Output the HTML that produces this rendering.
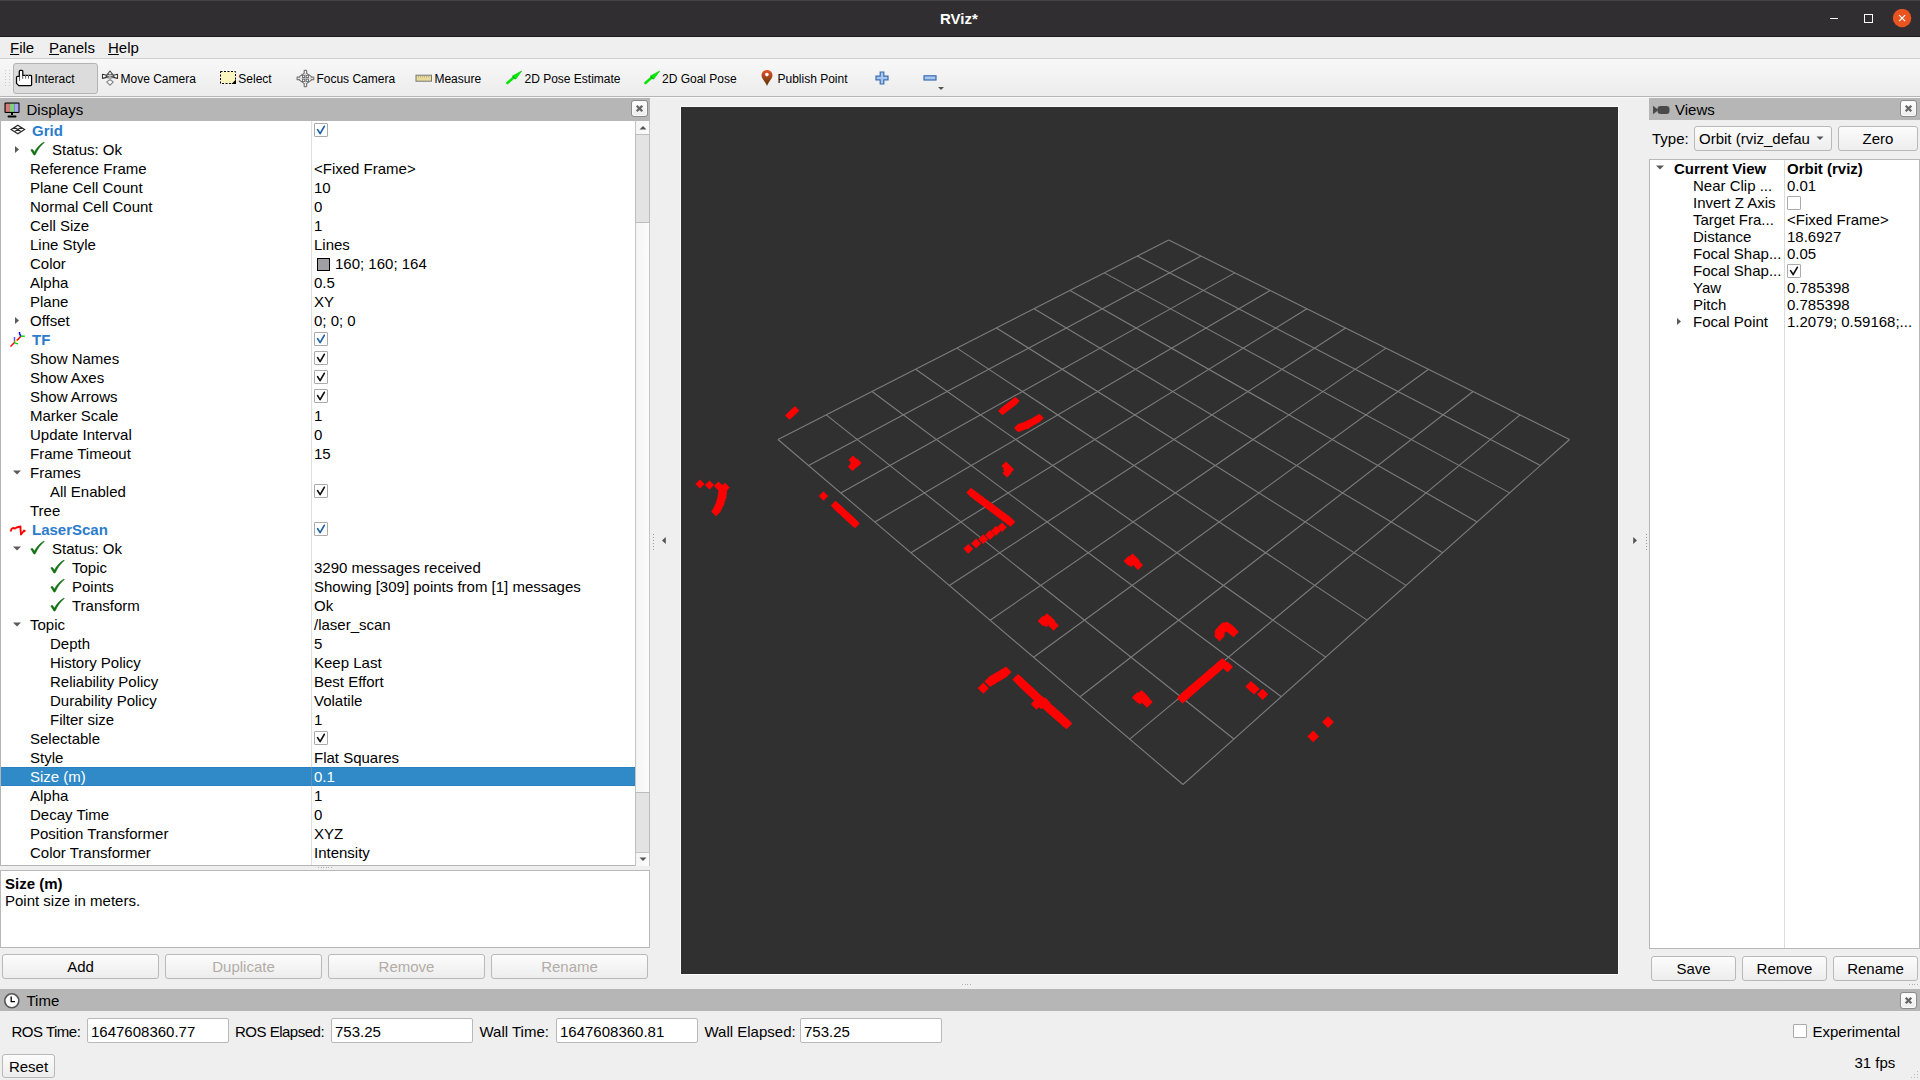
<!DOCTYPE html>
<html><head><meta charset="utf-8"><title>RViz</title>
<style>
html,body{margin:0;padding:0;width:1920px;height:1080px;overflow:hidden;background:#efefef;position:relative}
body>div,body>svg{position:absolute}
.t{font-family:"Liberation Sans", sans-serif;white-space:nowrap;line-height:normal}
</style></head><body>
<div style="left:0px;top:0px;width:1920px;height:37px;background:#302e30"></div>
<div style="left:0px;top:0px;width:1920px;height:1px;background:#454345"></div>
<div style="left:0px;top:36px;width:1920px;height:1px;background:#1c1b1c"></div>
<div class="t" style="left:940px;top:10px;font-size:15px;color:#fff;font-weight:bold">RViz*</div>
<div style="left:1830px;top:17.5px;width:8px;height:1.6px;background:#fff"></div>
<div style="left:1864px;top:14px;width:9px;height:9px;border:1.5px solid #fff;box-sizing:border-box"></div>
<svg style="left:1893px;top:9px" width="19" height="19"><circle cx="9.1" cy="9.1" r="9.2" fill="#e95420"/><path d="M6.1 6.1L12.1 12.1M12.1 6.1L6.1 12.1" stroke="#fff" stroke-width="1.2"/></svg>
<div style="left:0px;top:37px;width:1920px;height:21px;background:#efefef"></div>
<div class="t" style="left:10px;top:39px;font-size:15px;color:#000"><u>F</u>ile</div>
<div class="t" style="left:49px;top:39px;font-size:15px;color:#000"><u>P</u>anels</div>
<div class="t" style="left:108px;top:39px;font-size:15px;color:#000"><u>H</u>elp</div>
<div style="left:0px;top:58px;width:1920px;height:1px;background:#cfcfcf"></div>
<div style="left:0px;top:59px;width:1920px;height:1px;background:#fafafa"></div>
<div style="left:0px;top:59px;width:1920px;height:37px;background:linear-gradient(#f8f8f8,#ececec)"></div>
<div style="left:0px;top:96px;width:1920px;height:1px;background:#b5b5b5"></div>
<div style="left:0px;top:97px;width:1920px;height:1px;background:#f8f8f8"></div>
<div style="left:5.0px;top:70px;width:1.2px;height:1.2px;background:#c8c8c8"></div>
<div style="left:8.5px;top:70px;width:1.2px;height:1.2px;background:#c8c8c8"></div>
<div style="left:5.0px;top:73px;width:1.2px;height:1.2px;background:#c8c8c8"></div>
<div style="left:8.5px;top:73px;width:1.2px;height:1.2px;background:#c8c8c8"></div>
<div style="left:5.0px;top:76px;width:1.2px;height:1.2px;background:#c8c8c8"></div>
<div style="left:8.5px;top:76px;width:1.2px;height:1.2px;background:#c8c8c8"></div>
<div style="left:5.0px;top:79px;width:1.2px;height:1.2px;background:#c8c8c8"></div>
<div style="left:8.5px;top:79px;width:1.2px;height:1.2px;background:#c8c8c8"></div>
<div style="left:5.0px;top:82px;width:1.2px;height:1.2px;background:#c8c8c8"></div>
<div style="left:8.5px;top:82px;width:1.2px;height:1.2px;background:#c8c8c8"></div>
<div style="left:5.0px;top:85px;width:1.2px;height:1.2px;background:#c8c8c8"></div>
<div style="left:8.5px;top:85px;width:1.2px;height:1.2px;background:#c8c8c8"></div>
<div style="left:13px;top:63px;width:85px;height:31px;background:#dcdcdc;border:1px solid #b4b4b4;border-radius:3px;box-sizing:border-box"></div>
<svg style="left:12px;top:66px" width="24" height="24" viewBox="12 66 24 24"><path d="M19.3 76.3 L19.3 71.3 Q19.3 70.3 20.3 70.3 L21.8 70.3 Q22.8 70.3 22.8 71.3 L22.8 75.4 L30.8 75.4 Q31.6 75.6 31.6 76.5 L31.6 84.6 Q31.6 85.6 30.6 85.6 L18.8 85.6 L16.5 83.4 L16.5 77.3 Q16.6 76.3 17.5 76.3 Z" fill="#fff" stroke="#000" stroke-width="1.25" stroke-linejoin="round"/><path d="M19.6 76.5V80.8M22.7 75.6V78.8M25.6 75.6V78.6M28.5 75.6V78.6" stroke="#333" stroke-width="0.8"/><path d="M25.6 75.3V75.9M28.5 75.3V75.9" stroke="#ddd" stroke-width="0.8"/></svg>
<div class="t" style="left:34.5px;top:71.5px;font-size:12px;color:#000">Interact</div>
<svg style="left:98px;top:66px" width="24" height="24" viewBox="98 66 24 24"><path d="M110 79.3 L106.8 82 L110 85.2 L113.2 82 Z" fill="#fff" stroke="#888" stroke-width="1.1"/><path d="M110 71 L114.2 76.3 L105.8 76.3 Z" fill="#fff" stroke="#444" stroke-width="1.1" stroke-linejoin="round"/><path d="M102.5 74.3 L106.5 75.3 L106.5 77.4 L102.5 78.4 Z M117.5 74.3 L113.5 75.3 L113.5 77.4 L117.5 78.4 Z" fill="#fff" stroke="#333" stroke-width="1.1" stroke-linejoin="round"/><ellipse cx="110" cy="76.2" rx="4.2" ry="1.9" fill="none" stroke="#555" stroke-width="1"/><path d="M110 74.5V81" stroke="#bbb" stroke-width="1.2"/></svg>
<div class="t" style="left:120.5px;top:71.5px;font-size:12px;color:#000">Move Camera</div>
<svg style="left:219px;top:70px" width="18" height="15" viewBox="0 0 18 15"><rect x="1.5" y="1.5" width="15" height="12" fill="#fbf6c0" stroke="#000" stroke-width="1" stroke-dasharray="2,1.5"/><path d="M17 9.5 L17 14 L12.5 14 Z" fill="#000"/></svg>
<div class="t" style="left:238.3px;top:71.5px;font-size:12px;color:#000">Select</div>
<svg style="left:292px;top:66px" width="24" height="24" viewBox="292 66 24 24"><path d="M304.2 70.3 H306.6 V73.3 L311.2 76.6 V77.2 H313.7 V79.7 H311.2 V80.2 L306.6 83.6 V86.6 H304.2 V83.6 L299.6 80.2 V79.7 H297.1 V77.2 H299.6 V76.6 L304.2 73.3 Z" fill="#fafafa" stroke="#7a7a7a" stroke-width="1.2" stroke-linejoin="round"/><path d="M305.4 73V84M298.5 78.4H312.3" stroke="#c8c8c8" stroke-width="0.8"/><rect x="302.4" y="75.3" width="2.3" height="2.3" fill="none" stroke="#666" stroke-width="0.9"/><rect x="306.2" y="75.3" width="2.3" height="2.3" fill="none" stroke="#666" stroke-width="0.9"/><rect x="302.4" y="79.2" width="2.3" height="2.3" fill="none" stroke="#666" stroke-width="0.9"/><rect x="306.2" y="79.2" width="2.3" height="2.3" fill="none" stroke="#666" stroke-width="0.9"/></svg>
<div class="t" style="left:316.4px;top:71.5px;font-size:12px;color:#000">Focus Camera</div>
<svg style="left:415px;top:74px" width="18" height="9" viewBox="0 0 18 9"><rect x="1" y="1.2" width="15.5" height="6" fill="#e9dc9a" stroke="#777" stroke-width="1"/><path d="M3.5 1.5V3.5M5.5 1.5V3.5M7.5 1.5V3.5M9.5 1.5V3.5M11.5 1.5V3.5M13.5 1.5V3.5" stroke="#999" stroke-width="0.6"/></svg>
<div class="t" style="left:434.4px;top:71.5px;font-size:12px;color:#000">Measure</div>
<svg style="left:502px;top:66px" width="24" height="24" viewBox="502 66 24 24"><path d="M507.4 83 L514 77.3" stroke="#00e600" stroke-width="2.5" stroke-linecap="round"/><path d="M521.7 71 L512.4 76 L515.7 79.2 Z" fill="#00f000" stroke="#00c800" stroke-width="0.6" stroke-linejoin="round"/><path d="M513 76.6 L515 78.6" stroke="#0a6a0a" stroke-width="1"/></svg>
<div class="t" style="left:524.5px;top:71.5px;font-size:12px;color:#000">2D Pose Estimate</div>
<svg style="left:640.4px;top:66px" width="24" height="24" viewBox="502 66 24 24"><path d="M507.4 83 L514 77.3" stroke="#00e600" stroke-width="2.5" stroke-linecap="round"/><path d="M521.7 71 L512.4 76 L515.7 79.2 Z" fill="#00f000" stroke="#00c800" stroke-width="0.6" stroke-linejoin="round"/><path d="M513 76.6 L515 78.6" stroke="#0a6a0a" stroke-width="1"/></svg>
<div class="t" style="left:662px;top:71.5px;font-size:12px;color:#000">2D Goal Pose</div>
<svg style="left:760px;top:69px" width="14" height="18" viewBox="0 0 14 18"><defs><linearGradient id="pg" x1="0" y1="0" x2="0" y2="1"><stop offset="0" stop-color="#e8532a"/><stop offset="1" stop-color="#4f3508"/></linearGradient></defs><path d="M7 17 C5 12 1.5 9.5 1.5 6.5 C1.5 3.2 4 1 7 1 C10 1 12.5 3.2 12.5 6.5 C12.5 9.5 9 12 7 17 Z" fill="url(#pg)"/><circle cx="6.9" cy="5.6" r="1.8" fill="#fff"/></svg>
<div class="t" style="left:777.5px;top:71.5px;font-size:12px;color:#000">Publish Point</div>
<svg style="left:875px;top:71px" width="14" height="14" viewBox="0 0 14 14"><path d="M5.2 1H8.8V5.2H13V8.8H8.8V13H5.2V8.8H1V5.2H5.2Z" fill="#a9c6ec" stroke="#3a6cb3" stroke-width="1.2"/></svg>
<svg style="left:923px;top:75px" width="14" height="6" viewBox="0 0 14 6"><rect x="1" y="0.8" width="12" height="4.2" fill="#a9c6ec" stroke="#3a6cb3" stroke-width="1.2"/></svg>
<svg style="left:937px;top:86px" width="8" height="5" viewBox="0 0 8 5"><path d="M1 1H7L4 4Z" fill="#555"/></svg>
<div style="left:0px;top:98px;width:650px;height:23px;background:#b6b6b6"></div>
<svg style="left:3px;top:101px" width="18" height="18" viewBox="0 0 18 18"><rect x="1.5" y="1.5" width="15" height="10.5" rx="1" fill="#000"/><rect x="2.6" y="2.6" width="4.3" height="8.3" fill="#d77a7a"/><rect x="6.9" y="2.6" width="4.4" height="8.3" fill="#7fcf7f"/><rect x="11.3" y="2.6" width="4.2" height="8.3" fill="#a6a6f0"/><path d="M8 12H10V14H8Z" fill="#000"/><rect x="4.5" y="14.5" width="9" height="2" rx="1" fill="#000"/></svg>
<div class="t" style="left:26.5px;top:101px;font-size:15px;color:#000">Displays</div>
<div style="left:631px;top:100px;width:17px;height:17px;box-sizing:border-box;border:1px solid #8a8a8a;border-radius:3px;background:linear-gradient(#ffffff,#ececec);box-shadow:inset 0 0 0 1px #fafafa"></div>
<svg style="left:631px;top:100px" width="17" height="17" viewBox="0 0 17 17"><path d="M5.7 5.7L11.3 11.3M11.3 5.7L5.7 11.3" stroke="#666" stroke-width="2.3"/></svg>
<div style="left:0px;top:121px;width:650px;height:745px;background:#fff;border-left:1px solid #b4b4b4;border-bottom:1px solid #b4b4b4;box-sizing:border-box"></div>
<div style="left:311px;top:121px;width:1px;height:744px;background:#e0e0e0"></div>
<div style="left:635px;top:121px;width:15px;height:745px;background:linear-gradient(90deg,#f4f4f4,#fcfcfc);border-left:1px solid #c4c4c4;border-right:1px solid #c4c4c4;box-sizing:border-box"></div>
<div style="left:635px;top:134px;width:15px;height:89px;background:#e3e3e3;border:1px solid #bcbcbc;box-sizing:border-box"></div>
<svg style="left:636.5px;top:123px" width="12" height="10" viewBox="0 0 12 10"><path d="M2.5 6.5H9.5L6 3Z" fill="#555"/></svg>
<div style="left:635px;top:792px;width:15px;height:61px;background:#e3e3e3;border:1px solid #bcbcbc;box-sizing:border-box"></div>
<div style="left:635px;top:852px;width:15px;height:1px;background:#c4c4c4"></div>
<svg style="left:636.5px;top:854px" width="12" height="10" viewBox="0 0 12 10"><path d="M2.5 3.5H9.5L6 7Z" fill="#555"/></svg>
<svg style="left:10px;top:124px" width="17" height="12" viewBox="0 0 17 12"><path d="M7.85 1.2 L14.6 5.5 L7.85 9.8 L1.1 5.5Z M4.5 3.35 L11.2 7.65 M11.2 3.35 L4.5 7.65" fill="none" stroke="#2a2a2a" stroke-width="1.15"/></svg>
<div class="t" style="left:32px;top:122px;font-size:15px;color:#2b7ccc;font-weight:bold">Grid</div>
<div style="left:314px;top:123px;width:14px;height:14px;box-sizing:border-box;border:1px solid #ababab;border-radius:1px;background:#fff"></div>
<svg style="left:314px;top:123px" width="14" height="14" viewBox="0 0 14 14"><path d="M3.6 6.6 L6.1 10.6 L10.3 3.3" fill="none" stroke="#1f5fa8" stroke-width="1.7" stroke-linecap="round" stroke-linejoin="round"/></svg>
<svg style="left:13px;top:143px" width="8" height="13" viewBox="0 0 8 13"><path d="M2 3 L6 6.5 L2 10Z" fill="#5a5a5a"/></svg>
<svg style="left:30px;top:140px" width="16" height="19" viewBox="0 0 16 19"><path d="M0.8 9.9 Q1.9 8.9 2.9 9.8 L4.3 12.2 C6.6 8 9.6 4.6 14 2 L14.3 2.6 C10.6 5.6 7.6 9.6 5.3 14.7 Q4.4 15.6 3.6 14.7 Z" fill="#137013" stroke="#137013" stroke-width="0.5" stroke-linejoin="round"/></svg>
<div class="t" style="left:52px;top:141px;font-size:15px;color:#000">Status: Ok</div>
<div class="t" style="left:30px;top:160px;font-size:15px;color:#000">Reference Frame</div>
<div class="t" style="left:314px;top:160px;font-size:15px;color:#000">&lt;Fixed Frame&gt;</div>
<div class="t" style="left:30px;top:179px;font-size:15px;color:#000">Plane Cell Count</div>
<div class="t" style="left:314px;top:179px;font-size:15px;color:#000">10</div>
<div class="t" style="left:30px;top:198px;font-size:15px;color:#000">Normal Cell Count</div>
<div class="t" style="left:314px;top:198px;font-size:15px;color:#000">0</div>
<div class="t" style="left:30px;top:217px;font-size:15px;color:#000">Cell Size</div>
<div class="t" style="left:314px;top:217px;font-size:15px;color:#000">1</div>
<div class="t" style="left:30px;top:236px;font-size:15px;color:#000">Line Style</div>
<div class="t" style="left:314px;top:236px;font-size:15px;color:#000">Lines</div>
<div class="t" style="left:30px;top:255px;font-size:15px;color:#000">Color</div>
<div style="left:317px;top:258px;width:13px;height:13px;background:#a0a0a4;border:1.3px solid #000;box-sizing:border-box"></div>
<div class="t" style="left:335px;top:255px;font-size:15px;color:#000">160; 160; 164</div>
<div class="t" style="left:30px;top:274px;font-size:15px;color:#000">Alpha</div>
<div class="t" style="left:314px;top:274px;font-size:15px;color:#000">0.5</div>
<div class="t" style="left:30px;top:293px;font-size:15px;color:#000">Plane</div>
<div class="t" style="left:314px;top:293px;font-size:15px;color:#000">XY</div>
<svg style="left:13px;top:314px" width="8" height="13" viewBox="0 0 8 13"><path d="M2 3 L6 6.5 L2 10Z" fill="#5a5a5a"/></svg>
<div class="t" style="left:30px;top:312px;font-size:15px;color:#000">Offset</div>
<div class="t" style="left:314px;top:312px;font-size:15px;color:#000">0; 0; 0</div>
<svg style="left:9px;top:331px" width="18" height="17" viewBox="0 0 18 17"><path d="M1.5 15.5 L5.5 11.5" stroke="#f00" stroke-width="1.5"/><path d="M5.5 11.5 L5.5 6" stroke="#55f" stroke-width="1.5"/><path d="M5.5 11.5 Q7 12.8 9 12.8" stroke="#0d0" stroke-width="1.5" fill="none"/><path d="M6 11 L8 8.5" stroke="#ee0" stroke-width="1.3"/><path d="M8 9.5 L11.8 5.2" stroke="#f00" stroke-width="1.5"/><path d="M11.8 5.2 L10.5 2.5 L10.5 1" stroke="#00f" stroke-width="1.5" fill="none"/><path d="M11.8 5.2 L15.8 5.2" stroke="#0d0" stroke-width="1.5"/></svg>
<div class="t" style="left:32px;top:331px;font-size:15px;color:#2b7ccc;font-weight:bold">TF</div>
<div style="left:314px;top:332px;width:14px;height:14px;box-sizing:border-box;border:1px solid #ababab;border-radius:1px;background:#fff"></div>
<svg style="left:314px;top:332px" width="14" height="14" viewBox="0 0 14 14"><path d="M3.6 6.6 L6.1 10.6 L10.3 3.3" fill="none" stroke="#1f5fa8" stroke-width="1.7" stroke-linecap="round" stroke-linejoin="round"/></svg>
<div class="t" style="left:30px;top:350px;font-size:15px;color:#000">Show Names</div>
<div style="left:314px;top:351px;width:14px;height:14px;box-sizing:border-box;border:1px solid #ababab;border-radius:1px;background:#fff"></div>
<svg style="left:314px;top:351px" width="14" height="14" viewBox="0 0 14 14"><path d="M3.6 6.6 L6.1 10.6 L10.3 3.3" fill="none" stroke="#111" stroke-width="1.7" stroke-linecap="round" stroke-linejoin="round"/></svg>
<div class="t" style="left:30px;top:369px;font-size:15px;color:#000">Show Axes</div>
<div style="left:314px;top:370px;width:14px;height:14px;box-sizing:border-box;border:1px solid #ababab;border-radius:1px;background:#fff"></div>
<svg style="left:314px;top:370px" width="14" height="14" viewBox="0 0 14 14"><path d="M3.6 6.6 L6.1 10.6 L10.3 3.3" fill="none" stroke="#111" stroke-width="1.7" stroke-linecap="round" stroke-linejoin="round"/></svg>
<div class="t" style="left:30px;top:388px;font-size:15px;color:#000">Show Arrows</div>
<div style="left:314px;top:389px;width:14px;height:14px;box-sizing:border-box;border:1px solid #ababab;border-radius:1px;background:#fff"></div>
<svg style="left:314px;top:389px" width="14" height="14" viewBox="0 0 14 14"><path d="M3.6 6.6 L6.1 10.6 L10.3 3.3" fill="none" stroke="#111" stroke-width="1.7" stroke-linecap="round" stroke-linejoin="round"/></svg>
<div class="t" style="left:30px;top:407px;font-size:15px;color:#000">Marker Scale</div>
<div class="t" style="left:314px;top:407px;font-size:15px;color:#000">1</div>
<div class="t" style="left:30px;top:426px;font-size:15px;color:#000">Update Interval</div>
<div class="t" style="left:314px;top:426px;font-size:15px;color:#000">0</div>
<div class="t" style="left:30px;top:445px;font-size:15px;color:#000">Frame Timeout</div>
<div class="t" style="left:314px;top:445px;font-size:15px;color:#000">15</div>
<svg style="left:12px;top:466.5px" width="10" height="13" viewBox="0 0 10 13"><path d="M1 3.5 H9 L5 7.5Z" fill="#5a5a5a"/></svg>
<div class="t" style="left:30px;top:464px;font-size:15px;color:#000">Frames</div>
<div class="t" style="left:50px;top:483px;font-size:15px;color:#000">All Enabled</div>
<div style="left:314px;top:484px;width:14px;height:14px;box-sizing:border-box;border:1px solid #ababab;border-radius:1px;background:#fff"></div>
<svg style="left:314px;top:484px" width="14" height="14" viewBox="0 0 14 14"><path d="M3.6 6.6 L6.1 10.6 L10.3 3.3" fill="none" stroke="#111" stroke-width="1.7" stroke-linecap="round" stroke-linejoin="round"/></svg>
<div class="t" style="left:30px;top:502px;font-size:15px;color:#000">Tree</div>
<svg style="left:9px;top:524px" width="18" height="12" viewBox="0 0 18 12"><path d="M1.5 7.5 L2.5 5 L4 4 L6 4.5 L7.5 3.5 L9.5 3 L11.5 2.5 L11.5 5 L12 10.5 L14 8 L15 6.5 L16.5 7.5" fill="none" stroke="#f00" stroke-width="1.9" stroke-linejoin="round"/></svg>
<div class="t" style="left:32px;top:521px;font-size:15px;color:#2b7ccc;font-weight:bold">LaserScan</div>
<div style="left:314px;top:522px;width:14px;height:14px;box-sizing:border-box;border:1px solid #ababab;border-radius:1px;background:#fff"></div>
<svg style="left:314px;top:522px" width="14" height="14" viewBox="0 0 14 14"><path d="M3.6 6.6 L6.1 10.6 L10.3 3.3" fill="none" stroke="#1f5fa8" stroke-width="1.7" stroke-linecap="round" stroke-linejoin="round"/></svg>
<svg style="left:12px;top:542.5px" width="10" height="13" viewBox="0 0 10 13"><path d="M1 3.5 H9 L5 7.5Z" fill="#5a5a5a"/></svg>
<svg style="left:30px;top:539px" width="16" height="19" viewBox="0 0 16 19"><path d="M0.8 9.9 Q1.9 8.9 2.9 9.8 L4.3 12.2 C6.6 8 9.6 4.6 14 2 L14.3 2.6 C10.6 5.6 7.6 9.6 5.3 14.7 Q4.4 15.6 3.6 14.7 Z" fill="#137013" stroke="#137013" stroke-width="0.5" stroke-linejoin="round"/></svg>
<div class="t" style="left:52px;top:540px;font-size:15px;color:#000">Status: Ok</div>
<svg style="left:50px;top:558px" width="16" height="19" viewBox="0 0 16 19"><path d="M0.8 9.9 Q1.9 8.9 2.9 9.8 L4.3 12.2 C6.6 8 9.6 4.6 14 2 L14.3 2.6 C10.6 5.6 7.6 9.6 5.3 14.7 Q4.4 15.6 3.6 14.7 Z" fill="#137013" stroke="#137013" stroke-width="0.5" stroke-linejoin="round"/></svg>
<div class="t" style="left:72px;top:559px;font-size:15px;color:#000">Topic</div>
<div class="t" style="left:314px;top:559px;font-size:15px;color:#000">3290 messages received</div>
<svg style="left:50px;top:577px" width="16" height="19" viewBox="0 0 16 19"><path d="M0.8 9.9 Q1.9 8.9 2.9 9.8 L4.3 12.2 C6.6 8 9.6 4.6 14 2 L14.3 2.6 C10.6 5.6 7.6 9.6 5.3 14.7 Q4.4 15.6 3.6 14.7 Z" fill="#137013" stroke="#137013" stroke-width="0.5" stroke-linejoin="round"/></svg>
<div class="t" style="left:72px;top:578px;font-size:15px;color:#000">Points</div>
<div class="t" style="left:314px;top:578px;font-size:15px;color:#000">Showing [309] points from [1] messages</div>
<svg style="left:50px;top:596px" width="16" height="19" viewBox="0 0 16 19"><path d="M0.8 9.9 Q1.9 8.9 2.9 9.8 L4.3 12.2 C6.6 8 9.6 4.6 14 2 L14.3 2.6 C10.6 5.6 7.6 9.6 5.3 14.7 Q4.4 15.6 3.6 14.7 Z" fill="#137013" stroke="#137013" stroke-width="0.5" stroke-linejoin="round"/></svg>
<div class="t" style="left:72px;top:597px;font-size:15px;color:#000">Transform</div>
<div class="t" style="left:314px;top:597px;font-size:15px;color:#000">Ok</div>
<svg style="left:12px;top:618.5px" width="10" height="13" viewBox="0 0 10 13"><path d="M1 3.5 H9 L5 7.5Z" fill="#5a5a5a"/></svg>
<div class="t" style="left:30px;top:616px;font-size:15px;color:#000">Topic</div>
<div class="t" style="left:314px;top:616px;font-size:15px;color:#000">/laser_scan</div>
<div class="t" style="left:50px;top:635px;font-size:15px;color:#000">Depth</div>
<div class="t" style="left:314px;top:635px;font-size:15px;color:#000">5</div>
<div class="t" style="left:50px;top:654px;font-size:15px;color:#000">History Policy</div>
<div class="t" style="left:314px;top:654px;font-size:15px;color:#000">Keep Last</div>
<div class="t" style="left:50px;top:673px;font-size:15px;color:#000">Reliability Policy</div>
<div class="t" style="left:314px;top:673px;font-size:15px;color:#000">Best Effort</div>
<div class="t" style="left:50px;top:692px;font-size:15px;color:#000">Durability Policy</div>
<div class="t" style="left:314px;top:692px;font-size:15px;color:#000">Volatile</div>
<div class="t" style="left:50px;top:711px;font-size:15px;color:#000">Filter size</div>
<div class="t" style="left:314px;top:711px;font-size:15px;color:#000">1</div>
<div class="t" style="left:30px;top:730px;font-size:15px;color:#000">Selectable</div>
<div style="left:314px;top:731px;width:14px;height:14px;box-sizing:border-box;border:1px solid #ababab;border-radius:1px;background:#fff"></div>
<svg style="left:314px;top:731px" width="14" height="14" viewBox="0 0 14 14"><path d="M3.6 6.6 L6.1 10.6 L10.3 3.3" fill="none" stroke="#111" stroke-width="1.7" stroke-linecap="round" stroke-linejoin="round"/></svg>
<div class="t" style="left:30px;top:749px;font-size:15px;color:#000">Style</div>
<div class="t" style="left:314px;top:749px;font-size:15px;color:#000">Flat Squares</div>
<div style="left:1px;top:767px;width:634px;height:19px;background:#308ac8;border-top:1px solid #2a81c2;border-bottom:1px solid #2a81c2;box-sizing:border-box"></div>
<div style="left:311px;top:767px;width:1px;height:19px;background:#5a93bd"></div>
<div class="t" style="left:30px;top:768px;font-size:15px;color:#fff">Size (m)</div>
<div class="t" style="left:314px;top:768px;font-size:15px;color:#fff">0.1</div>
<div class="t" style="left:30px;top:787px;font-size:15px;color:#000">Alpha</div>
<div class="t" style="left:314px;top:787px;font-size:15px;color:#000">1</div>
<div class="t" style="left:30px;top:806px;font-size:15px;color:#000">Decay Time</div>
<div class="t" style="left:314px;top:806px;font-size:15px;color:#000">0</div>
<div class="t" style="left:30px;top:825px;font-size:15px;color:#000">Position Transformer</div>
<div class="t" style="left:314px;top:825px;font-size:15px;color:#000">XYZ</div>
<div class="t" style="left:30px;top:844px;font-size:15px;color:#000">Color Transformer</div>
<div class="t" style="left:314px;top:844px;font-size:15px;color:#000">Intensity</div>
<div style="left:318.0px;top:867px;width:1px;height:1px;background:#b0b0b0"></div>
<div style="left:320.5px;top:867px;width:1px;height:1px;background:#b0b0b0"></div>
<div style="left:323.0px;top:867px;width:1px;height:1px;background:#b0b0b0"></div>
<div style="left:325.5px;top:867px;width:1px;height:1px;background:#b0b0b0"></div>
<div style="left:328.0px;top:867px;width:1px;height:1px;background:#b0b0b0"></div>
<div style="left:330.5px;top:867px;width:1px;height:1px;background:#b0b0b0"></div>
<div style="left:0px;top:870px;width:650px;height:78px;background:#fff;border:1px solid #b8b8b8;box-sizing:border-box"></div>
<div class="t" style="left:5px;top:875px;font-size:15px;color:#000;font-weight:bold">Size (m)</div>
<div class="t" style="left:5px;top:892px;font-size:15px;color:#000">Point size in meters.</div>
<div style="left:2px;top:954px;width:157px;height:25px;box-sizing:border-box;border:1px solid #b9b9b9;border-radius:3px;background:linear-gradient(#fcfcfc,#ededed)"></div>
<div class="t" style="left:2px;top:958px;width:157px;text-align:center;font-size:15px;color:#000">Add</div>
<div style="left:165px;top:954px;width:157px;height:25px;box-sizing:border-box;border:1px solid #b9b9b9;border-radius:3px;background:linear-gradient(#fcfcfc,#ededed)"></div>
<div class="t" style="left:165px;top:958px;width:157px;text-align:center;font-size:15px;color:#b2aca6">Duplicate</div>
<div style="left:328px;top:954px;width:157px;height:25px;box-sizing:border-box;border:1px solid #b9b9b9;border-radius:3px;background:linear-gradient(#fcfcfc,#ededed)"></div>
<div class="t" style="left:328px;top:958px;width:157px;text-align:center;font-size:15px;color:#b2aca6">Remove</div>
<div style="left:491px;top:954px;width:157px;height:25px;box-sizing:border-box;border:1px solid #b9b9b9;border-radius:3px;background:linear-gradient(#fcfcfc,#ededed)"></div>
<div class="t" style="left:491px;top:958px;width:157px;text-align:center;font-size:15px;color:#b2aca6">Rename</div>
<div style="left:680px;top:106px;width:939px;height:869px;background:#fafafa"></div>
<div style="left:681px;top:107px;width:937px;height:867px;background:#303030"></div>
<svg style="left:660px;top:536px" width="8" height="10" viewBox="0 0 8 10"><path d="M5.8 1V8L2 4.5Z" fill="#555"/></svg>
<div style="left:653px;top:534px;width:1.2px;height:1.2px;background:#9a9a9a"></div>
<div style="left:653px;top:537px;width:1.2px;height:1.2px;background:#9a9a9a"></div>
<div style="left:653px;top:540px;width:1.2px;height:1.2px;background:#9a9a9a"></div>
<div style="left:653px;top:543px;width:1.2px;height:1.2px;background:#9a9a9a"></div>
<div style="left:653px;top:546px;width:1.2px;height:1.2px;background:#9a9a9a"></div>
<div style="left:653px;top:549px;width:1.2px;height:1.2px;background:#9a9a9a"></div>
<div style="left:1646px;top:534px;width:1.2px;height:1.2px;background:#9a9a9a"></div>
<div style="left:1646px;top:537px;width:1.2px;height:1.2px;background:#9a9a9a"></div>
<div style="left:1646px;top:540px;width:1.2px;height:1.2px;background:#9a9a9a"></div>
<div style="left:1646px;top:543px;width:1.2px;height:1.2px;background:#9a9a9a"></div>
<div style="left:1646px;top:546px;width:1.2px;height:1.2px;background:#9a9a9a"></div>
<div style="left:1646px;top:549px;width:1.2px;height:1.2px;background:#9a9a9a"></div>
<svg style="left:1631px;top:536px" width="8" height="10" viewBox="0 0 8 10"><path d="M2.2 1V8L6 4.5Z" fill="#555"/></svg>
<div style="left:1649px;top:98px;width:271px;height:22px;background:#b6b6b6"></div>
<svg style="left:1652px;top:104px" width="19" height="12" viewBox="0 0 19 12"><path d="M1 1.8 L6.5 6 L1 10.2Z" fill="#4a4a4a"/><rect x="5.5" y="2" width="12" height="8" rx="3" fill="#4a4a4a"/></svg>
<div class="t" style="left:1675px;top:101px;font-size:15px;color:#000">Views</div>
<div style="left:1900px;top:100px;width:17px;height:17px;box-sizing:border-box;border:1px solid #8a8a8a;border-radius:3px;background:linear-gradient(#ffffff,#ececec);box-shadow:inset 0 0 0 1px #fafafa"></div>
<svg style="left:1900px;top:100px" width="17" height="17" viewBox="0 0 17 17"><path d="M5.7 5.7L11.3 11.3M11.3 5.7L5.7 11.3" stroke="#666" stroke-width="2.3"/></svg>
<div class="t" style="left:1652px;top:130px;font-size:15px;color:#000">Type:</div>
<div style="left:1694px;top:126px;width:138px;height:25px;box-sizing:border-box;border:1px solid #b9b9b9;border-radius:3px;background:linear-gradient(#fcfcfc,#ededed)"></div>
<div class="t" style="left:1699px;top:130px;width:111px;overflow:hidden;font-size:15px;color:#000">Orbit (rviz_default_plugins)</div>
<svg style="left:1815px;top:134px" width="10" height="8" viewBox="0 0 10 8"><path d="M1.5 2.5H8.5L5 6Z" fill="#555"/></svg>
<div style="left:1838px;top:126px;width:80px;height:25px;box-sizing:border-box;border:1px solid #b9b9b9;border-radius:3px;background:linear-gradient(#fcfcfc,#ededed)"></div>
<div class="t" style="left:1838px;top:130px;width:80px;text-align:center;font-size:15px;color:#000">Zero</div>
<div style="left:1649px;top:159px;width:271px;height:790px;background:#fff;border:1px solid #b8b8b8;box-sizing:border-box"></div>
<div style="left:1784px;top:160px;width:1px;height:788px;background:#dcdcdc"></div>
<svg style="left:1655px;top:162px" width="10" height="13" viewBox="0 0 10 13"><path d="M1 3.5 H9 L5 7.5Z" fill="#5a5a5a"/></svg>
<div class="t" style="left:1674px;top:160px;font-size:15px;color:#000;font-weight:bold">Current View</div>
<div class="t" style="left:1787px;top:160px;font-size:15px;color:#000;font-weight:bold">Orbit (rviz)</div>
<div class="t" style="left:1693px;top:177px;font-size:15px;color:#000">Near Clip ...</div>
<div class="t" style="left:1787px;top:177px;font-size:15px;color:#000">0.01</div>
<div class="t" style="left:1693px;top:194px;font-size:15px;color:#000">Invert Z Axis</div>
<div style="left:1787px;top:196px;width:14px;height:14px;box-sizing:border-box;border:1px solid #ababab;border-radius:1px;background:#fff"></div>
<div class="t" style="left:1693px;top:211px;font-size:15px;color:#000">Target Fra...</div>
<div class="t" style="left:1787px;top:211px;font-size:15px;color:#000">&lt;Fixed Frame&gt;</div>
<div class="t" style="left:1693px;top:228px;font-size:15px;color:#000">Distance</div>
<div class="t" style="left:1787px;top:228px;font-size:15px;color:#000">18.6927</div>
<div class="t" style="left:1693px;top:245px;font-size:15px;color:#000">Focal Shap...</div>
<div class="t" style="left:1787px;top:245px;font-size:15px;color:#000">0.05</div>
<div class="t" style="left:1693px;top:262px;font-size:15px;color:#000">Focal Shap...</div>
<div style="left:1787px;top:264px;width:14px;height:14px;box-sizing:border-box;border:1px solid #ababab;border-radius:1px;background:#fff"></div>
<svg style="left:1787px;top:264px" width="14" height="14" viewBox="0 0 14 14"><path d="M3.6 6.6 L6.1 10.6 L10.3 3.3" fill="none" stroke="#111" stroke-width="1.7" stroke-linecap="round" stroke-linejoin="round"/></svg>
<div class="t" style="left:1693px;top:279px;font-size:15px;color:#000">Yaw</div>
<div class="t" style="left:1787px;top:279px;font-size:15px;color:#000">0.785398</div>
<div class="t" style="left:1693px;top:296px;font-size:15px;color:#000">Pitch</div>
<div class="t" style="left:1787px;top:296px;font-size:15px;color:#000">0.785398</div>
<svg style="left:1675px;top:315px" width="8" height="13" viewBox="0 0 8 13"><path d="M2 3 L6 6.5 L2 10Z" fill="#5a5a5a"/></svg>
<div class="t" style="left:1693px;top:313px;font-size:15px;color:#000">Focal Point</div>
<div class="t" style="left:1787px;top:313px;font-size:15px;color:#000">1.2079; 0.59168;...</div>
<div style="left:1651px;top:956px;width:85px;height:25px;box-sizing:border-box;border:1px solid #b9b9b9;border-radius:3px;background:linear-gradient(#fcfcfc,#ededed)"></div>
<div class="t" style="left:1651px;top:960px;width:85px;text-align:center;font-size:15px;color:#000">Save</div>
<div style="left:1742px;top:956px;width:85px;height:25px;box-sizing:border-box;border:1px solid #b9b9b9;border-radius:3px;background:linear-gradient(#fcfcfc,#ededed)"></div>
<div class="t" style="left:1742px;top:960px;width:85px;text-align:center;font-size:15px;color:#000">Remove</div>
<div style="left:1833px;top:956px;width:85px;height:25px;box-sizing:border-box;border:1px solid #b9b9b9;border-radius:3px;background:linear-gradient(#fcfcfc,#ededed)"></div>
<div class="t" style="left:1833px;top:960px;width:85px;text-align:center;font-size:15px;color:#000">Rename</div>
<div style="left:962.0px;top:984px;width:1px;height:1px;background:#b0b0b0"></div>
<div style="left:964.5px;top:984px;width:1px;height:1px;background:#b0b0b0"></div>
<div style="left:967.0px;top:984px;width:1px;height:1px;background:#b0b0b0"></div>
<div style="left:969.5px;top:984px;width:1px;height:1px;background:#b0b0b0"></div>
<div style="left:1909.0px;top:984px;width:1px;height:1px;background:#b0b0b0"></div>
<div style="left:1911.5px;top:984px;width:1px;height:1px;background:#b0b0b0"></div>
<div style="left:1914.0px;top:984px;width:1px;height:1px;background:#b0b0b0"></div>
<div style="left:1916.5px;top:984px;width:1px;height:1px;background:#b0b0b0"></div>
<div style="left:0px;top:989px;width:1920px;height:22px;background:#b6b6b6"></div>
<svg style="left:3px;top:992px" width="18" height="18" viewBox="0 0 18 18"><circle cx="8.8" cy="8.8" r="7" fill="#fff" stroke="#555" stroke-width="1.6"/><path d="M8.2 4.5V9.6H12" fill="none" stroke="#000" stroke-width="1.3"/></svg>
<div class="t" style="left:26.5px;top:992px;font-size:15px;color:#000">Time</div>
<div style="left:1900px;top:992px;width:17px;height:17px;box-sizing:border-box;border:1px solid #8a8a8a;border-radius:3px;background:linear-gradient(#ffffff,#ececec);box-shadow:inset 0 0 0 1px #fafafa"></div>
<svg style="left:1900px;top:992px" width="17" height="17" viewBox="0 0 17 17"><path d="M5.7 5.7L11.3 11.3M11.3 5.7L5.7 11.3" stroke="#666" stroke-width="2.3"/></svg>
<div class="t" style="left:11.5px;top:1023px;font-size:15px;color:#000;letter-spacing:-0.5px">ROS Time:</div>
<div style="left:87px;top:1018px;width:142px;height:25px;box-sizing:border-box;border:1px solid #b9b9b9;border-radius:2px;background:#fff"></div>
<div class="t" style="left:91px;top:1023px;font-size:15px;color:#000">1647608360.77</div>
<div class="t" style="left:235px;top:1023px;font-size:15px;color:#000;letter-spacing:-0.5px">ROS Elapsed:</div>
<div style="left:331px;top:1018px;width:142px;height:25px;box-sizing:border-box;border:1px solid #b9b9b9;border-radius:2px;background:#fff"></div>
<div class="t" style="left:335px;top:1023px;font-size:15px;color:#000">753.25</div>
<div class="t" style="left:479.5px;top:1023px;font-size:15px;color:#000">Wall Time:</div>
<div style="left:556px;top:1018px;width:142px;height:25px;box-sizing:border-box;border:1px solid #b9b9b9;border-radius:2px;background:#fff"></div>
<div class="t" style="left:560px;top:1023px;font-size:15px;color:#000">1647608360.81</div>
<div class="t" style="left:704.5px;top:1023px;font-size:15px;color:#000">Wall Elapsed:</div>
<div style="left:800px;top:1018px;width:142px;height:25px;box-sizing:border-box;border:1px solid #b9b9b9;border-radius:2px;background:#fff"></div>
<div class="t" style="left:804px;top:1023px;font-size:15px;color:#000">753.25</div>
<div style="left:1793px;top:1024px;width:14px;height:14px;box-sizing:border-box;border:1px solid #ababab;border-radius:1px;background:#fff"></div>
<div class="t" style="left:1812.5px;top:1023px;font-size:15px;color:#000">Experimental</div>
<div class="t" style="left:1854.5px;top:1054px;font-size:15px;color:#000">31 fps</div>
<div style="left:2px;top:1054px;width:53px;height:24px;box-sizing:border-box;border:1px solid #b9b9b9;border-radius:3px;background:linear-gradient(#fcfcfc,#ededed)"></div>
<div class="t" style="left:2px;top:1058px;width:53px;text-align:center;font-size:15px;color:#000">Reset</div>
<div style="left:1917px;top:1071px;width:1px;height:1px;background:#bbb"></div>
<div style="left:1914px;top:1074px;width:1px;height:1px;background:#bbb"></div>
<div style="left:1917px;top:1074px;width:1px;height:1px;background:#bbb"></div>
<div style="left:1911px;top:1077px;width:1px;height:1px;background:#bbb"></div>
<div style="left:1914px;top:1077px;width:1px;height:1px;background:#bbb"></div>
<div style="left:1917px;top:1077px;width:1px;height:1px;background:#bbb"></div>
<svg style="left:681px;top:107px" width="937" height="867" viewBox="681 107 937 867"><g stroke="#7c7c7e" stroke-width="1.1" fill="none"><line x1="1168.75" y1="240.00" x2="778.00" y2="439.50"/><line x1="1168.75" y1="240.00" x2="1569.50" y2="439.50"/><line x1="1201.07" y1="256.09" x2="808.51" y2="465.49"/><line x1="1137.27" y1="256.07" x2="1540.42" y2="465.46"/><line x1="1234.81" y1="272.89" x2="840.74" y2="492.94"/><line x1="1104.39" y1="272.86" x2="1509.69" y2="492.89"/><line x1="1270.07" y1="290.44" x2="874.83" y2="521.99"/><line x1="1070.04" y1="290.40" x2="1477.17" y2="521.92"/><line x1="1306.95" y1="308.80" x2="910.97" y2="552.77"/><line x1="1034.10" y1="308.75" x2="1442.70" y2="552.68"/><line x1="1345.56" y1="328.02" x2="949.33" y2="585.45"/><line x1="996.46" y1="327.97" x2="1406.10" y2="585.35"/><line x1="1386.04" y1="348.17" x2="990.12" y2="620.20"/><line x1="956.99" y1="348.11" x2="1367.17" y2="620.10"/><line x1="1428.51" y1="369.31" x2="1033.60" y2="657.23"/><line x1="915.57" y1="369.26" x2="1325.68" y2="657.14"/><line x1="1473.13" y1="391.52" x2="1080.02" y2="696.78"/><line x1="872.05" y1="391.48" x2="1281.36" y2="696.70"/><line x1="1520.06" y1="414.89" x2="1129.70" y2="739.10"/><line x1="826.25" y1="414.86" x2="1233.91" y2="739.05"/><line x1="1569.50" y1="439.50" x2="1183.00" y2="784.50"/><line x1="778.00" y1="439.50" x2="1183.00" y2="784.50"/></g><path d="M789.5 411.2L793.8 415.5L789.5 419.8L785.2 415.5Z" fill="#f00"/><path d="M790.9 409.9L795.2 414.2L790.9 418.6L786.6 414.2Z" fill="#f00"/><path d="M792.2 408.7L796.6 413.0L792.2 417.3L787.9 413.0Z" fill="#f00"/><path d="M793.6 407.4L797.9 411.8L793.6 416.1L789.3 411.8Z" fill="#f00"/><path d="M795.0 406.2L799.3 410.5L795.0 414.8L790.7 410.5Z" fill="#f00"/><path d="M700.0 479.4L704.6 484.0L700.0 488.6L695.4 484.0Z" fill="#f00"/><path d="M709.5 480.4L714.1 485.0L709.5 489.6L704.9 485.0Z" fill="#f00"/><path d="M718.5 481.4L723.1 486.0L718.5 490.6L713.9 486.0Z" fill="#f00"/><path d="M725.0 482.8L729.7 487.5L725.0 492.2L720.3 487.5Z" fill="#f00"/><path d="M723.0 484.3L727.7 489.0L723.0 493.7L718.3 489.0Z" fill="#f00"/><path d="M722.8 485.9L727.5 490.6L722.8 495.3L718.1 490.6Z" fill="#f00"/><path d="M722.6 487.5L727.3 492.2L722.6 496.9L717.9 492.2Z" fill="#f00"/><path d="M722.4 489.1L727.1 493.8L722.4 498.5L717.7 493.8Z" fill="#f00"/><path d="M722.2 490.7L726.9 495.4L722.2 500.1L717.5 495.4Z" fill="#f00"/><path d="M722.0 492.3L726.7 497.0L722.0 501.7L717.3 497.0Z" fill="#f00"/><path d="M722.0 492.3L726.7 497.0L722.0 501.7L717.3 497.0Z" fill="#f00"/><path d="M721.5 493.9L726.2 498.6L721.5 503.3L716.8 498.6Z" fill="#f00"/><path d="M721.0 495.5L725.7 500.2L721.0 504.9L716.3 500.2Z" fill="#f00"/><path d="M720.5 497.1L725.2 501.8L720.5 506.5L715.8 501.8Z" fill="#f00"/><path d="M720.0 498.7L724.7 503.4L720.0 508.1L715.3 503.4Z" fill="#f00"/><path d="M719.5 500.3L724.2 505.0L719.5 509.7L714.8 505.0Z" fill="#f00"/><path d="M719.5 500.3L724.2 505.0L719.5 509.7L714.8 505.0Z" fill="#f00"/><path d="M718.6 501.9L723.4 506.6L718.6 511.4L713.9 506.6Z" fill="#f00"/><path d="M717.8 503.5L722.5 508.2L717.8 513.0L713.0 508.2Z" fill="#f00"/><path d="M716.9 505.1L721.6 509.9L716.9 514.6L712.1 509.9Z" fill="#f00"/><path d="M716.0 506.7L720.8 511.5L716.0 516.3L711.2 511.5Z" fill="#f00"/><path d="M853.0 455.5L857.5 460.0L853.0 464.5L848.5 460.0Z" fill="#f00"/><path d="M857.0 458.5L861.5 463.0L857.0 467.5L852.5 463.0Z" fill="#f00"/><path d="M852.5 461.9L857.1 466.5L852.5 471.1L847.9 466.5Z" fill="#f00"/><path d="M854.5 458.5L859.0 463.0L854.5 467.5L850.0 463.0Z" fill="#f00"/><path d="M823.5 491.3L828.2 496.0L823.5 500.7L818.8 496.0Z" fill="#f00"/><path d="M835.5 500.8L840.2 505.5L835.5 510.2L830.8 505.5Z" fill="#f00"/><path d="M836.6 501.8L841.4 506.6L836.6 511.3L831.9 506.6Z" fill="#f00"/><path d="M837.8 502.9L842.5 507.6L837.8 512.4L833.0 507.6Z" fill="#f00"/><path d="M838.9 503.9L843.7 508.7L838.9 513.4L834.2 508.7Z" fill="#f00"/><path d="M840.1 505.0L844.8 509.7L840.1 514.5L835.3 509.7Z" fill="#f00"/><path d="M841.2 506.0L846.0 510.8L841.2 515.6L836.5 510.8Z" fill="#f00"/><path d="M842.4 507.1L847.2 511.9L842.4 516.6L837.6 511.9Z" fill="#f00"/><path d="M843.5 508.1L848.3 512.9L843.5 517.7L838.8 512.9Z" fill="#f00"/><path d="M844.7 509.2L849.5 514.0L844.7 518.7L839.9 514.0Z" fill="#f00"/><path d="M845.8 510.2L850.6 515.0L845.8 519.8L841.0 515.0Z" fill="#f00"/><path d="M847.0 511.3L851.8 516.1L847.0 520.9L842.2 516.1Z" fill="#f00"/><path d="M848.1 512.4L852.9 517.1L848.1 521.9L843.3 517.1Z" fill="#f00"/><path d="M849.3 513.4L854.1 518.2L849.3 523.0L844.5 518.2Z" fill="#f00"/><path d="M850.4 514.5L855.2 519.3L850.4 524.1L845.6 519.3Z" fill="#f00"/><path d="M851.6 515.5L856.4 520.3L851.6 525.1L846.8 520.3Z" fill="#f00"/><path d="M852.7 516.6L857.5 521.4L852.7 526.2L847.9 521.4Z" fill="#f00"/><path d="M853.9 517.6L858.7 522.4L853.9 527.3L849.0 522.4Z" fill="#f00"/><path d="M855.0 518.7L859.8 523.5L855.0 528.3L850.2 523.5Z" fill="#f00"/><path d="M1002.5 406.7L1006.8 411.0L1002.5 415.3L998.2 411.0Z" fill="#f00"/><path d="M1003.8 405.7L1008.1 410.0L1003.8 414.3L999.5 410.0Z" fill="#f00"/><path d="M1005.1 404.7L1009.4 409.0L1005.1 413.3L1000.8 409.0Z" fill="#f00"/><path d="M1006.4 403.7L1010.7 408.0L1006.4 412.3L1002.1 408.0Z" fill="#f00"/><path d="M1007.7 402.7L1012.0 407.0L1007.7 411.3L1003.4 407.0Z" fill="#f00"/><path d="M1009.0 401.7L1013.3 406.0L1009.0 410.3L1004.7 406.0Z" fill="#f00"/><path d="M1010.3 400.7L1014.6 405.0L1010.3 409.3L1006.0 405.0Z" fill="#f00"/><path d="M1011.6 399.7L1015.9 404.0L1011.6 408.3L1007.3 404.0Z" fill="#f00"/><path d="M1012.9 398.7L1017.2 403.0L1012.9 407.3L1008.6 403.0Z" fill="#f00"/><path d="M1014.2 397.7L1018.5 402.0L1014.2 406.3L1009.9 402.0Z" fill="#f00"/><path d="M1015.5 396.8L1019.7 401.0L1015.5 405.2L1011.3 401.0Z" fill="#f00"/><path d="M1018.5 423.6L1022.9 428.0L1018.5 432.4L1014.1 428.0Z" fill="#f00"/><path d="M1020.1 423.0L1024.5 427.4L1020.1 431.8L1015.7 427.4Z" fill="#f00"/><path d="M1021.7 422.5L1026.0 426.8L1021.7 431.2L1017.3 426.8Z" fill="#f00"/><path d="M1023.2 421.9L1027.6 426.2L1023.2 430.6L1018.9 426.2Z" fill="#f00"/><path d="M1024.8 421.3L1029.2 425.7L1024.8 430.0L1020.5 425.7Z" fill="#f00"/><path d="M1026.4 420.7L1030.8 425.1L1026.4 429.4L1022.1 425.1Z" fill="#f00"/><path d="M1028.0 420.1L1032.4 424.5L1028.0 428.9L1023.6 424.5Z" fill="#f00"/><path d="M1028.0 420.1L1032.4 424.5L1028.0 428.9L1023.6 424.5Z" fill="#f00"/><path d="M1029.4 419.3L1033.8 423.7L1029.4 428.0L1025.1 423.7Z" fill="#f00"/><path d="M1030.9 418.5L1035.2 422.9L1030.9 427.2L1026.5 422.9Z" fill="#f00"/><path d="M1032.3 417.7L1036.7 422.1L1032.3 426.4L1028.0 422.1Z" fill="#f00"/><path d="M1033.8 416.9L1038.1 421.2L1033.8 425.6L1029.4 421.2Z" fill="#f00"/><path d="M1035.2 416.1L1039.5 420.4L1035.2 424.8L1030.8 420.4Z" fill="#f00"/><path d="M1036.6 415.3L1041.0 419.6L1036.6 424.0L1032.3 419.6Z" fill="#f00"/><path d="M1038.1 414.5L1042.4 418.8L1038.1 423.1L1033.7 418.8Z" fill="#f00"/><path d="M1039.5 413.7L1043.8 418.0L1039.5 422.3L1035.2 418.0Z" fill="#f00"/><path d="M1006.0 461.4L1010.6 466.0L1006.0 470.6L1001.4 466.0Z" fill="#f00"/><path d="M1009.5 464.9L1014.1 469.5L1009.5 474.1L1004.9 469.5Z" fill="#f00"/><path d="M1007.0 468.4L1011.6 473.0L1007.0 477.6L1002.4 473.0Z" fill="#f00"/><path d="M1007.5 464.9L1012.1 469.5L1007.5 474.1L1002.9 469.5Z" fill="#f00"/><path d="M971.0 487.8L975.7 492.5L971.0 497.2L966.3 492.5Z" fill="#f00"/><path d="M972.2 488.7L976.9 493.4L972.2 498.1L967.6 493.4Z" fill="#f00"/><path d="M973.5 489.7L978.2 494.3L973.5 499.0L968.8 494.3Z" fill="#f00"/><path d="M974.7 490.6L979.4 495.3L974.7 500.0L970.0 495.3Z" fill="#f00"/><path d="M975.9 491.5L980.6 496.2L975.9 500.9L971.2 496.2Z" fill="#f00"/><path d="M977.2 492.4L981.9 497.1L977.2 501.8L972.5 497.1Z" fill="#f00"/><path d="M978.4 493.3L983.1 498.0L978.4 502.7L973.7 498.0Z" fill="#f00"/><path d="M979.6 494.2L984.3 499.0L979.6 503.7L974.9 499.0Z" fill="#f00"/><path d="M980.9 495.2L985.6 499.9L980.9 504.6L976.2 499.9Z" fill="#f00"/><path d="M982.1 496.1L986.8 500.8L982.1 505.5L977.4 500.8Z" fill="#f00"/><path d="M983.3 497.0L988.1 501.7L983.3 506.4L978.6 501.7Z" fill="#f00"/><path d="M984.6 497.9L989.3 502.6L984.6 507.4L979.9 502.6Z" fill="#f00"/><path d="M985.8 498.8L990.5 503.6L985.8 508.3L981.1 503.6Z" fill="#f00"/><path d="M987.0 499.8L991.8 504.5L987.0 509.2L982.3 504.5Z" fill="#f00"/><path d="M988.3 500.7L993.0 505.4L988.3 510.1L983.5 505.4Z" fill="#f00"/><path d="M989.5 501.6L994.3 506.3L989.5 511.1L984.8 506.3Z" fill="#f00"/><path d="M990.8 502.5L995.5 507.2L990.8 512.0L986.0 507.2Z" fill="#f00"/><path d="M992.0 503.4L996.7 508.2L992.0 512.9L987.2 508.2Z" fill="#f00"/><path d="M993.2 504.3L998.0 509.1L993.2 513.8L988.5 509.1Z" fill="#f00"/><path d="M994.5 505.3L999.2 510.0L994.5 514.8L989.7 510.0Z" fill="#f00"/><path d="M995.7 506.2L1000.5 510.9L995.7 515.7L990.9 510.9Z" fill="#f00"/><path d="M996.9 507.1L1001.7 511.9L996.9 516.6L992.2 511.9Z" fill="#f00"/><path d="M998.2 508.0L1002.9 512.8L998.2 517.6L993.4 512.8Z" fill="#f00"/><path d="M999.4 508.9L1004.2 513.7L999.4 518.5L994.6 513.7Z" fill="#f00"/><path d="M1000.6 509.8L1005.4 514.6L1000.6 519.4L995.8 514.6Z" fill="#f00"/><path d="M1001.9 510.8L1006.6 515.5L1001.9 520.3L997.1 515.5Z" fill="#f00"/><path d="M1003.1 511.7L1007.9 516.5L1003.1 521.3L998.3 516.5Z" fill="#f00"/><path d="M1004.3 512.6L1009.1 517.4L1004.3 522.2L999.5 517.4Z" fill="#f00"/><path d="M1005.6 513.5L1010.4 518.3L1005.6 523.1L1000.8 518.3Z" fill="#f00"/><path d="M1006.8 514.4L1011.6 519.2L1006.8 524.0L1002.0 519.2Z" fill="#f00"/><path d="M1008.0 515.3L1012.8 520.2L1008.0 525.0L1003.2 520.2Z" fill="#f00"/><path d="M1009.3 516.3L1014.1 521.1L1009.3 525.9L1004.5 521.1Z" fill="#f00"/><path d="M1010.5 517.2L1015.3 522.0L1010.5 526.8L1005.7 522.0Z" fill="#f00"/><path d="M968.3 543.9L973.2 548.8L968.3 553.7L963.4 548.8Z" fill="#f00"/><path d="M976.1 538.5L981.0 543.4L976.1 548.3L971.2 543.4Z" fill="#f00"/><path d="M983.3 534.3L988.2 539.2L983.3 544.1L978.4 539.2Z" fill="#f00"/><path d="M990.0 530.1L994.9 535.0L990.0 539.9L985.1 535.0Z" fill="#f00"/><path d="M996.0 525.9L1000.9 530.8L996.0 535.7L991.1 530.8Z" fill="#f00"/><path d="M1002.0 522.4L1006.8 527.2L1002.0 532.0L997.2 527.2Z" fill="#f00"/><path d="M1128.5 556.0L1133.5 561.0L1128.5 566.0L1123.5 561.0Z" fill="#f00"/><path d="M1132.5 553.5L1137.5 558.5L1132.5 563.5L1127.5 558.5Z" fill="#f00"/><path d="M1135.0 556.0L1140.0 561.0L1135.0 566.0L1130.0 561.0Z" fill="#f00"/><path d="M1138.0 560.0L1143.0 565.0L1138.0 570.0L1133.0 565.0Z" fill="#f00"/><path d="M1131.0 557.0L1136.0 562.0L1131.0 567.0L1126.0 562.0Z" fill="#f00"/><path d="M1043.0 615.7L1048.3 621.0L1043.0 626.3L1037.7 621.0Z" fill="#f00"/><path d="M1047.0 613.2L1052.3 618.5L1047.0 623.8L1041.7 618.5Z" fill="#f00"/><path d="M1050.0 615.7L1055.3 621.0L1050.0 626.3L1044.7 621.0Z" fill="#f00"/><path d="M1053.5 620.2L1058.8 625.5L1053.5 630.8L1048.2 625.5Z" fill="#f00"/><path d="M1046.0 616.7L1051.3 622.0L1046.0 627.3L1040.7 622.0Z" fill="#f00"/><path d="M983.3 682.6L988.9 688.2L983.3 693.8L977.7 688.2Z" fill="#f00"/><path d="M990.0 675.9L995.6 681.5L990.0 687.1L984.4 681.5Z" fill="#f00"/><path d="M991.3 675.1L996.9 680.7L991.3 686.3L985.8 680.7Z" fill="#f00"/><path d="M992.7 674.4L998.2 679.9L992.7 685.5L987.1 679.9Z" fill="#f00"/><path d="M994.0 673.6L999.6 679.1L994.0 684.7L988.4 679.1Z" fill="#f00"/><path d="M995.3 672.8L1000.9 678.3L995.3 683.9L989.8 678.3Z" fill="#f00"/><path d="M996.7 672.0L1002.2 677.5L996.7 683.1L991.1 677.5Z" fill="#f00"/><path d="M998.0 671.2L1003.5 676.8L998.0 682.3L992.5 676.8Z" fill="#f00"/><path d="M999.3 670.4L1004.9 676.0L999.3 681.5L993.8 676.0Z" fill="#f00"/><path d="M1000.7 669.6L1006.2 675.2L1000.7 680.7L995.1 675.2Z" fill="#f00"/><path d="M1002.0 668.8L1007.5 674.4L1002.0 679.9L996.5 674.4Z" fill="#f00"/><path d="M1003.3 668.1L1008.9 673.6L1003.3 679.1L997.8 673.6Z" fill="#f00"/><path d="M1004.7 667.3L1010.2 672.8L1004.7 678.3L999.1 672.8Z" fill="#f00"/><path d="M1006.0 666.5L1011.5 672.0L1006.0 677.5L1000.5 672.0Z" fill="#f00"/><path d="M1018.0 673.9L1023.6 679.5L1018.0 685.1L1012.4 679.5Z" fill="#f00"/><path d="M1019.1 675.0L1024.7 680.6L1019.1 686.1L1013.6 680.6Z" fill="#f00"/><path d="M1020.2 676.0L1025.8 681.6L1020.2 687.2L1014.7 681.6Z" fill="#f00"/><path d="M1021.3 677.1L1026.9 682.7L1021.3 688.2L1015.8 682.7Z" fill="#f00"/><path d="M1022.4 678.1L1028.0 683.7L1022.4 689.3L1016.9 683.7Z" fill="#f00"/><path d="M1023.6 679.2L1029.1 684.8L1023.6 690.4L1018.0 684.8Z" fill="#f00"/><path d="M1024.7 680.3L1030.2 685.8L1024.7 691.4L1019.1 685.8Z" fill="#f00"/><path d="M1025.8 681.3L1031.4 686.9L1025.8 692.5L1020.2 686.9Z" fill="#f00"/><path d="M1026.9 682.4L1032.5 687.9L1026.9 693.5L1021.3 687.9Z" fill="#f00"/><path d="M1028.0 683.4L1033.6 689.0L1028.0 694.6L1022.4 689.0Z" fill="#f00"/><path d="M1029.1 684.5L1034.7 690.1L1029.1 695.7L1023.5 690.1Z" fill="#f00"/><path d="M1030.2 685.5L1035.8 691.1L1030.2 696.7L1024.6 691.1Z" fill="#f00"/><path d="M1031.3 686.6L1036.9 692.2L1031.3 697.8L1025.7 692.2Z" fill="#f00"/><path d="M1032.4 687.6L1038.1 693.2L1032.4 698.8L1026.8 693.2Z" fill="#f00"/><path d="M1033.6 688.7L1039.2 694.3L1033.6 699.9L1027.9 694.3Z" fill="#f00"/><path d="M1034.7 689.7L1040.3 695.3L1034.7 701.0L1029.0 695.3Z" fill="#f00"/><path d="M1035.8 690.8L1041.4 696.4L1035.8 702.0L1030.1 696.4Z" fill="#f00"/><path d="M1036.9 691.8L1042.5 697.4L1036.9 703.1L1031.3 697.4Z" fill="#f00"/><path d="M1038.0 692.9L1043.6 698.5L1038.0 704.1L1032.4 698.5Z" fill="#f00"/><path d="M1038.0 692.9L1043.6 698.5L1038.0 704.1L1032.4 698.5Z" fill="#f00"/><path d="M1039.3 694.0L1045.0 699.7L1039.3 705.3L1033.7 699.7Z" fill="#f00"/><path d="M1040.7 695.2L1046.3 700.8L1040.7 706.5L1035.0 700.8Z" fill="#f00"/><path d="M1042.0 696.3L1047.7 702.0L1042.0 707.7L1036.3 702.0Z" fill="#f00"/><path d="M1042.0 696.3L1047.7 702.0L1042.0 707.7L1036.3 702.0Z" fill="#f00"/><path d="M1043.2 697.4L1048.8 703.0L1043.2 708.7L1037.5 703.0Z" fill="#f00"/><path d="M1044.3 698.4L1050.0 704.0L1044.3 709.7L1038.7 704.0Z" fill="#f00"/><path d="M1045.5 699.4L1051.2 705.1L1045.5 710.7L1039.8 705.1Z" fill="#f00"/><path d="M1046.7 700.4L1052.3 706.1L1046.7 711.8L1041.0 706.1Z" fill="#f00"/><path d="M1047.8 701.4L1053.5 707.1L1047.8 712.8L1042.2 707.1Z" fill="#f00"/><path d="M1049.0 702.5L1054.7 708.1L1049.0 713.8L1043.3 708.1Z" fill="#f00"/><path d="M1050.2 703.5L1055.9 709.2L1050.2 714.9L1044.5 709.2Z" fill="#f00"/><path d="M1051.3 704.5L1057.0 710.2L1051.3 715.9L1045.6 710.2Z" fill="#f00"/><path d="M1052.5 705.5L1058.2 711.2L1052.5 716.9L1046.8 711.2Z" fill="#f00"/><path d="M1053.7 706.5L1059.4 712.2L1053.7 717.9L1048.0 712.2Z" fill="#f00"/><path d="M1054.8 707.6L1060.5 713.3L1054.8 719.0L1049.1 713.3Z" fill="#f00"/><path d="M1056.0 708.6L1061.7 714.3L1056.0 720.0L1050.3 714.3Z" fill="#f00"/><path d="M1057.2 709.6L1062.9 715.3L1057.2 721.0L1051.4 715.3Z" fill="#f00"/><path d="M1058.3 710.6L1064.1 716.3L1058.3 722.1L1052.6 716.3Z" fill="#f00"/><path d="M1059.5 711.6L1065.2 717.4L1059.5 723.1L1053.8 717.4Z" fill="#f00"/><path d="M1060.7 712.6L1066.4 718.4L1060.7 724.1L1054.9 718.4Z" fill="#f00"/><path d="M1061.8 713.7L1067.6 719.4L1061.8 725.1L1056.1 719.4Z" fill="#f00"/><path d="M1063.0 714.7L1068.7 720.4L1063.0 726.2L1057.3 720.4Z" fill="#f00"/><path d="M1064.2 715.7L1069.9 721.5L1064.2 727.2L1058.4 721.5Z" fill="#f00"/><path d="M1065.3 716.7L1071.1 722.5L1065.3 728.2L1059.6 722.5Z" fill="#f00"/><path d="M1066.5 717.7L1072.3 723.5L1066.5 729.3L1060.7 723.5Z" fill="#f00"/><path d="M1036.5 698.3L1042.2 704.0L1036.5 709.7L1030.8 704.0Z" fill="#f00"/><path d="M1041.0 697.8L1046.7 703.5L1041.0 709.2L1035.3 703.5Z" fill="#f00"/><path d="M1045.0 697.3L1050.7 703.0L1045.0 708.7L1039.3 703.0Z" fill="#f00"/><path d="M1219.5 630.7L1224.8 636.0L1219.5 641.3L1214.2 636.0Z" fill="#f00"/><path d="M1219.7 629.0L1225.0 634.3L1219.7 639.7L1214.3 634.3Z" fill="#f00"/><path d="M1219.8 627.3L1225.2 632.7L1219.8 638.0L1214.5 632.7Z" fill="#f00"/><path d="M1220.0 625.7L1225.3 631.0L1220.0 636.3L1214.7 631.0Z" fill="#f00"/><path d="M1220.0 625.7L1225.3 631.0L1220.0 636.3L1214.7 631.0Z" fill="#f00"/><path d="M1221.0 624.5L1226.3 629.8L1221.0 635.2L1215.7 629.8Z" fill="#f00"/><path d="M1222.0 623.4L1227.3 628.7L1222.0 634.0L1216.7 628.7Z" fill="#f00"/><path d="M1223.0 622.2L1228.3 627.5L1223.0 632.8L1217.7 627.5Z" fill="#f00"/><path d="M1223.0 622.2L1228.3 627.5L1223.0 632.8L1217.7 627.5Z" fill="#f00"/><path d="M1225.0 621.9L1230.3 627.2L1225.0 632.6L1219.7 627.2Z" fill="#f00"/><path d="M1227.0 621.7L1232.3 627.0L1227.0 632.3L1221.7 627.0Z" fill="#f00"/><path d="M1227.0 621.7L1232.3 627.0L1227.0 632.3L1221.7 627.0Z" fill="#f00"/><path d="M1228.3 622.5L1233.6 627.8L1228.3 633.1L1223.0 627.8Z" fill="#f00"/><path d="M1229.7 623.4L1235.0 628.7L1229.7 634.0L1224.4 628.7Z" fill="#f00"/><path d="M1231.0 624.2L1236.3 629.5L1231.0 634.8L1225.7 629.5Z" fill="#f00"/><path d="M1231.0 624.2L1236.3 629.5L1231.0 634.8L1225.7 629.5Z" fill="#f00"/><path d="M1232.2 625.4L1237.6 630.8L1232.2 636.1L1226.9 630.8Z" fill="#f00"/><path d="M1233.5 626.7L1238.8 632.0L1233.5 637.3L1228.2 632.0Z" fill="#f00"/><path d="M1137.5 691.9L1143.1 697.5L1137.5 703.1L1131.9 697.5Z" fill="#f00"/><path d="M1141.5 689.9L1147.1 695.5L1141.5 701.1L1135.9 695.5Z" fill="#f00"/><path d="M1144.0 692.4L1149.6 698.0L1144.0 703.6L1138.4 698.0Z" fill="#f00"/><path d="M1147.0 696.3L1152.7 702.0L1147.0 707.7L1141.3 702.0Z" fill="#f00"/><path d="M1140.0 693.4L1145.6 699.0L1140.0 704.6L1134.4 699.0Z" fill="#f00"/><path d="M1182.5 692.4L1188.1 698.0L1182.5 703.6L1176.9 698.0Z" fill="#f00"/><path d="M1183.6 691.4L1189.3 697.0L1183.6 702.6L1178.0 697.0Z" fill="#f00"/><path d="M1184.8 690.4L1190.4 696.0L1184.8 701.7L1179.2 696.0Z" fill="#f00"/><path d="M1185.9 689.4L1191.6 695.0L1185.9 700.7L1180.3 695.0Z" fill="#f00"/><path d="M1187.1 688.4L1192.7 694.1L1187.1 699.7L1181.5 694.1Z" fill="#f00"/><path d="M1188.2 687.5L1193.8 693.1L1188.2 698.7L1182.6 693.1Z" fill="#f00"/><path d="M1189.4 686.5L1195.0 692.1L1189.4 697.7L1183.7 692.1Z" fill="#f00"/><path d="M1190.5 685.5L1196.1 691.1L1190.5 696.7L1184.9 691.1Z" fill="#f00"/><path d="M1191.6 684.5L1197.2 690.1L1191.6 695.7L1186.0 690.1Z" fill="#f00"/><path d="M1192.8 683.5L1198.4 689.1L1192.8 694.7L1187.2 689.1Z" fill="#f00"/><path d="M1193.9 682.6L1199.5 688.1L1193.9 693.7L1188.3 688.1Z" fill="#f00"/><path d="M1195.1 681.6L1200.7 687.2L1195.1 692.7L1189.5 687.2Z" fill="#f00"/><path d="M1196.2 680.6L1201.8 686.2L1196.2 691.8L1190.6 686.2Z" fill="#f00"/><path d="M1197.4 679.6L1202.9 685.2L1197.4 690.8L1191.8 685.2Z" fill="#f00"/><path d="M1198.5 678.6L1204.1 684.2L1198.5 689.8L1192.9 684.2Z" fill="#f00"/><path d="M1199.6 677.6L1205.2 683.2L1199.6 688.8L1194.1 683.2Z" fill="#f00"/><path d="M1200.8 676.7L1206.4 682.2L1200.8 687.8L1195.2 682.2Z" fill="#f00"/><path d="M1201.9 675.7L1207.5 681.2L1201.9 686.8L1196.4 681.2Z" fill="#f00"/><path d="M1203.1 674.7L1208.6 680.3L1203.1 685.8L1197.5 680.3Z" fill="#f00"/><path d="M1204.2 673.7L1209.8 679.3L1204.2 684.8L1198.7 679.3Z" fill="#f00"/><path d="M1205.4 672.7L1210.9 678.3L1205.4 683.8L1199.8 678.3Z" fill="#f00"/><path d="M1206.5 671.8L1212.0 677.3L1206.5 682.8L1201.0 677.3Z" fill="#f00"/><path d="M1207.6 670.8L1213.2 676.3L1207.6 681.9L1202.1 676.3Z" fill="#f00"/><path d="M1208.8 669.8L1214.3 675.3L1208.8 680.9L1203.3 675.3Z" fill="#f00"/><path d="M1209.9 668.8L1215.5 674.3L1209.9 679.9L1204.4 674.3Z" fill="#f00"/><path d="M1211.1 667.8L1216.6 673.4L1211.1 678.9L1205.5 673.4Z" fill="#f00"/><path d="M1212.2 666.9L1217.7 672.4L1212.2 677.9L1206.7 672.4Z" fill="#f00"/><path d="M1213.4 665.9L1218.9 671.4L1213.4 676.9L1207.8 671.4Z" fill="#f00"/><path d="M1214.5 664.9L1220.0 670.4L1214.5 675.9L1209.0 670.4Z" fill="#f00"/><path d="M1215.6 663.9L1221.1 669.4L1215.6 674.9L1210.1 669.4Z" fill="#f00"/><path d="M1216.8 662.9L1222.3 668.4L1216.8 673.9L1211.3 668.4Z" fill="#f00"/><path d="M1217.9 661.9L1223.4 667.4L1217.9 672.9L1212.4 667.4Z" fill="#f00"/><path d="M1219.1 661.0L1224.6 666.5L1219.1 671.9L1213.6 666.5Z" fill="#f00"/><path d="M1220.2 660.0L1225.7 665.5L1220.2 671.0L1214.7 665.5Z" fill="#f00"/><path d="M1221.4 659.0L1226.8 664.5L1221.4 670.0L1215.9 664.5Z" fill="#f00"/><path d="M1222.5 658.0L1228.0 663.5L1222.5 669.0L1217.0 663.5Z" fill="#f00"/><path d="M1227.5 661.5L1233.0 667.0L1227.5 672.5L1222.0 667.0Z" fill="#f00"/><path d="M1251.0 680.9L1256.6 686.5L1251.0 692.1L1245.4 686.5Z" fill="#f00"/><path d="M1254.0 683.4L1259.6 689.0L1254.0 694.6L1248.4 689.0Z" fill="#f00"/><path d="M1262.6 688.7L1268.2 694.3L1262.6 699.9L1257.0 694.3Z" fill="#f00"/><path d="M1328.0 716.3L1333.8 722.1L1328.0 727.9L1322.2 722.1Z" fill="#f00"/><path d="M1313.2 730.6L1319.0 736.4L1313.2 742.2L1307.4 736.4Z" fill="#f00"/></svg>
</body></html>
